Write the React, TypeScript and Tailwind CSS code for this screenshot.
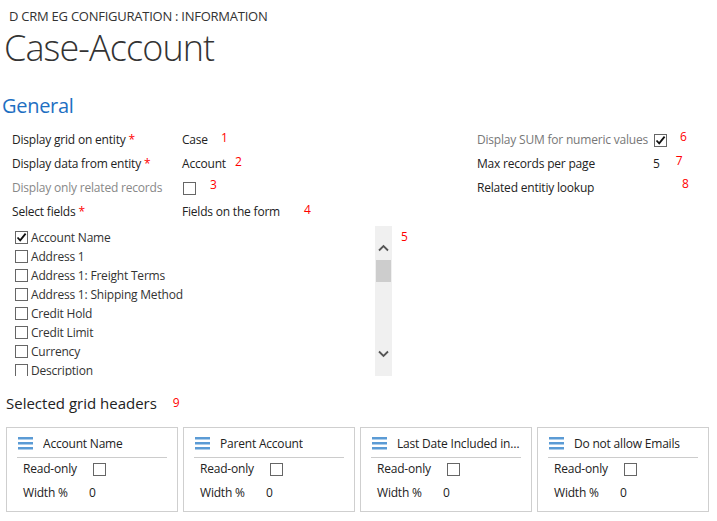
import React from "react";

const FONT = { fontFamily: '"Open Sans", "Noto Sans", sans-serif' };

function Box({ checked = false, className = "" }: { checked?: boolean; className?: string }) {
  return (
    <span
      className={`inline-flex items-center justify-center w-[13px] h-[13px] border border-[#666] bg-white shrink-0 ${className}`}
    >
      {checked && (
        <svg width="11" height="11" viewBox="0 0 11 11">
          <path d="M1.5 5.5 L4.2 8.4 L9.6 1.6" fill="none" stroke="#111" strokeWidth="1.8" />
        </svg>
      )}
    </span>
  );
}

function Num({ n, className = "" }: { n: string; className?: string }) {
  return <span className={`text-[12px] text-[#f00] leading-none tracking-normal ${className}`}>{n}</span>;
}

const fields = [
  ["Account Name", true],
  ["Address 1", false],
  ["Address 1: Freight Terms", false],
  ["Address 1: Shipping Method", false],
  ["Credit Hold", false],
  ["Credit Limit", false],
  ["Currency", false],
  ["Description", false],
] as const;

const cards = ["Account Name", "Parent Account", "Last Date Included in Campaign", "Do not allow Emails"];

function Hamburger() {
  return (
    <svg width="15" height="13" viewBox="0 0 15 13" className="shrink-0">
      <rect x="0" y="0" width="15" height="2.5" fill="#5b9bd5" />
      <rect x="0" y="5" width="15" height="2.5" fill="#5b9bd5" />
      <rect x="0" y="10" width="15" height="2.5" fill="#5b9bd5" />
    </svg>
  );
}

export default function App() {
  return (
    <div className="w-[717px] h-[521px] bg-white text-[#222] overflow-hidden" style={FONT}>
      <div className="pl-[9px] pt-[7px] text-[13px] leading-[18px] text-[#333] tracking-[-0.25px]">
        D CRM EG CONFIGURATION : INFORMATION
      </div>
      <div className="pl-[4px] mt-[1px] text-[36px] leading-[44px] font-light text-[#333] tracking-[-0.9px]">
        Case-Account
      </div>
      <div className="pl-[2px] mt-[23px] text-[20px] leading-[26px] text-[#1e6fc2] tracking-[-0.3px]">General</div>

      <div className="flex mt-[9px] text-[12px] tracking-[-0.2px]">
        {/* left form */}
        <div className="pl-[12px] w-[477px]">
          <div className="flex items-center h-[24px]">
            <span className="w-[170px]">
              Display grid on entity <span className="text-[#f00]">*</span>
            </span>
            <span>Case</span>
            <Num n="1" className="ml-[13px] -mt-[4px]" />
          </div>
          <div className="flex items-center h-[24px]">
            <span className="w-[170px]">
              Display data from entity <span className="text-[#f00]">*</span>
            </span>
            <span>Account</span>
            <Num n="2" className="ml-[9px] -mt-[4px]" />
          </div>
          <div className="flex items-center h-[24px]">
            <span className="w-[171px] text-[#888]">Display only related records</span>
            <Box />
            <Num n="3" className="ml-[14px] -mt-[6px]" />
          </div>
          <div className="flex items-center h-[24px]">
            <span className="w-[170px]">
              Select fields <span className="text-[#f00]">*</span>
            </span>
            <span>Fields on the form</span>
            <Num n="4" className="ml-[24px] -mt-[4px]" />
          </div>
        </div>
        {/* right form */}
        <div className="flex-1">
          <div className="flex items-center h-[24px]">
            <span className="w-[177px] text-[#777]">Display SUM for numeric values</span>
            <Box checked />
            <Num n="6" className="ml-[13px] -mt-[6px]" />
          </div>
          <div className="flex items-center h-[24px]">
            <span className="w-[176px]">Max records per page</span>
            <span>5</span>
            <Num n="7" className="ml-[16px] -mt-[6px]" />
          </div>
          <div className="flex items-center h-[24px]">
            <span className="w-[205px]">Related entitiy lookup</span>
            <Num n="8" className="-mt-[8px]" />
          </div>
        </div>
      </div>

      {/* field list */}
      <div className="flex mt-[2px] text-[12px] tracking-[-0.2px]">
        <div className="ml-[15px] w-[360px] h-[150px] overflow-hidden pt-[2px]">
          {fields.map(([name, checked]) => (
            <div key={name} className="flex items-center h-[19px] gap-[3px] text-[#333]">
              <Box checked={checked} />
              <span>{name}</span>
            </div>
          ))}
        </div>
        <div className="w-[17px] h-[150px] bg-[#f0f0f0] flex flex-col items-center">
          <svg width="11" height="8" viewBox="0 0 11 8" className="mt-[18px]">
            <path d="M1 6.5 L5.5 2 L10 6.5" fill="none" stroke="#555" strokeWidth="1.8" />
          </svg>
          <div className="mt-[8px] w-[15px] h-[22px] bg-[#cdcdcd]" />
          <svg width="11" height="8" viewBox="0 0 11 8" className="mt-[68px]">
            <path d="M1 1.5 L5.5 6 L10 1.5" fill="none" stroke="#555" strokeWidth="1.8" />
          </svg>
        </div>
        <Num n="5" className="ml-[9px] mt-[5px] h-fit" />
      </div>

      <div className="flex items-center pl-[6px] mt-[16px] h-[22px]">
        <span className="text-[15px] text-[#222]">Selected grid headers</span>
        <Num n="9" className="ml-[16px]" />
      </div>

      <div className="flex gap-[5px] pl-[6px] mt-[13px] text-[12px] tracking-[-0.2px]">
        {cards.map((c) => (
          <div key={c} className="w-[172px] h-[85px] border border-[#cfcfcf] px-[10px]">
            <div className="flex items-center h-[30px] pt-[2px] border-b border-[#ccc] pl-[1px]">
              <Hamburger />
              <span className="ml-[10px] truncate text-[#222]">{c}</span>
            </div>
            <div className="flex items-center h-[22px] pl-[6px]">
              <span className="w-[70px]">Read-only</span>
              <Box />
            </div>
            <div className="flex items-center h-[24px] mt-[1px] pl-[6px]">
              <span className="w-[66px]">Width %</span>
              <span>0</span>
            </div>
          </div>
        ))}
      </div>
    </div>
  );
}
